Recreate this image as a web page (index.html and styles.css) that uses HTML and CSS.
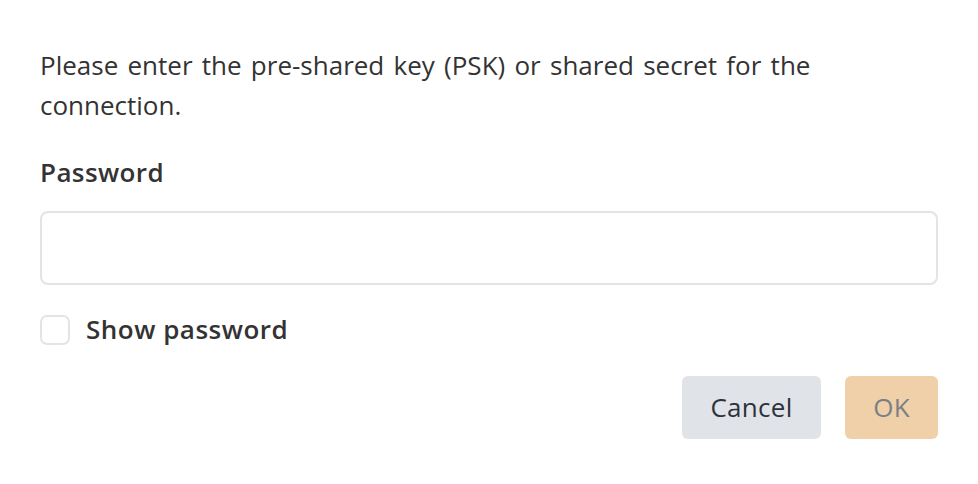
FILE: index.html
```html
<!DOCTYPE html>
<html>
<head>
<meta charset="utf-8">
<link rel="stylesheet" href="styles.css">
</head>
<body>
<div class="dialog">
  <p class="message">Please enter the pre-shared key (PSK) or shared secret for the connection.</p>
  <label class="field-label" for="pw">Password</label>
  <input class="field-input" id="pw" type="password">
  <label class="check-row">
    <span class="checkbox"></span>
    <span class="check-text">Show password</span>
  </label>
  <div class="actions">
    <button class="btn btn-cancel">Cancel</button>
    <button class="btn btn-ok">OK</button>
  </div>
</div>
</body>
</html>
```
FILE: styles.css
```css
html, body {
  margin: 0;
  padding: 0;
  background: #ffffff;
}
.dialog {
  width: 898px;
  padding: 45px 40px 0 40px;
  font-family: "Open Sans", "Noto Sans", sans-serif;
  color: #333333;
  display: flex;
  flex-direction: column;
}
.message {
  margin: 0;
  width: 820px;
  font-size: 26px;
  line-height: 40px;
  word-spacing: 2.5px;
}
.field-label {
  margin-top: 27px;
  font-size: 26px;
  line-height: 40px;
  font-weight: 600;
  letter-spacing: 0.4px;
}
.field-input {
  margin-top: 19px;
  box-sizing: border-box;
  width: 898px;
  height: 74px;
  border: 2px solid #e2e4e8;
  border-radius: 8px;
  outline: none;
  background: #fff;
}
.check-row {
  margin-top: 30px;
  display: flex;
  align-items: center;
  gap: 16px;
}
.checkbox {
  box-sizing: border-box;
  width: 30px;
  height: 30px;
  border: 2px solid #e2e4e8;
  border-radius: 7px;
}
.check-text {
  margin-top: -2px;
  font-size: 26px;
  line-height: 30px;
  font-weight: 600;
  letter-spacing: 0.5px;
}
.actions {
  margin-top: 31px;
  display: flex;
  justify-content: flex-end;
  gap: 24px;
}
.btn {
  height: 63px;
  border: none;
  border-radius: 6px;
  font-family: "Open Sans", "Noto Sans", sans-serif;
  font-size: 26px;
  letter-spacing: 0.3px;
  padding: 0 0 2px 0;
}
.btn-cancel {
  width: 139px;
  background: #e0e3e8;
  color: #2d333c;
}
.btn-ok {
  width: 93px;
  background: #f0d0a8;
  color: #7b8087;
}
```
